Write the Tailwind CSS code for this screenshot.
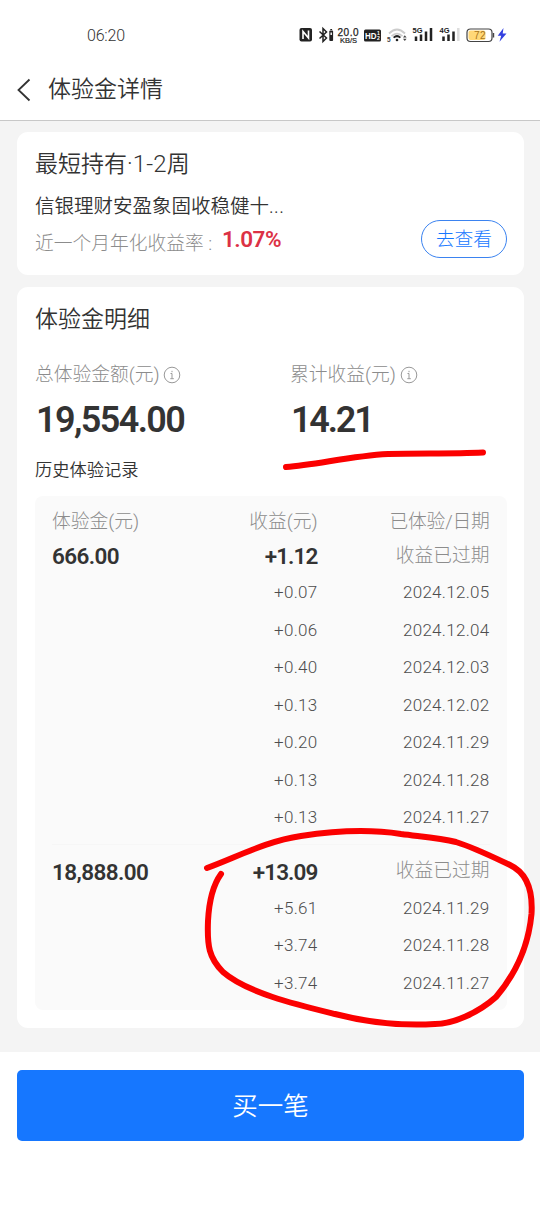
<!DOCTYPE html>
<html lang="zh-CN">

<head>
    <meta charset="UTF-8">
    <meta name="viewport" content="width=device-width, initial-scale=1.0">
    <title>体验金详情</title>
    <script src="https://cdn.jsdelivr.net/npm/@tailwindcss/browser@4"></script>
</head>

<body class="relative w-[540px] h-[1206px] overflow-hidden flex flex-col bg-[#f4f4f4] text-[#333] font-['Roboto','Noto_Sans_CJK_SC',sans-serif] font-[350] [font-kerning:none] whitespace-nowrap">
    <!-- Status bar -->
    <div class="h-[61px] shrink-0 bg-white flex items-center justify-between pl-[87px] pr-[33px] pt-[9px]">
        <span class="text-[16px] leading-5 pt-0.5 tracking-[-0.2px]">06:20</span>
        <svg width="208" height="20" viewBox="299 25 208 20" fill="none" class="overflow-visible font-['Liberation_Sans',sans-serif]">
            <!-- NFC -->
            <rect x="299.500" y="28" width="12.500" height="13.500" rx="2" fill="#222" />
            <path d="M303 39v-7.500l5.500 6.500v-7.500" stroke="#fff" stroke-width="1.600" />
            <!-- bluetooth -->
            <path d="M319.500 31.500l7 6.500-3.500 3.500v-13l3.500 3.500-7 6.500" stroke="#222" stroke-width="1.500" />
            <rect x="329.300" y="30.500" width="3.800" height="10.500" rx="1" fill="#222" />
            <path d="M330.300 29.500h1.800" stroke="#222" />
            <path d="M330.500 32.500h1.400v2.500h-1.400z" fill="#fff" />
            <text x="337.500" y="35.500" font-size="10" textLength="21" fill="#222" stroke="#222" stroke-width=".25">20.0</text>
            <text x="340" y="43" font-size="7.500" textLength="17" lengthAdjust="spacingAndGlyphs" fill="#222" stroke="#222" stroke-width=".2">KB/S</text>
            <!-- HD -->
            <rect x="364" y="29.500" width="17" height="12" rx="1.500" fill="#222" />
            <text x="365" y="39" font-size="9" font-weight="700" textLength="11.500" lengthAdjust="spacingAndGlyphs" fill="#fff">HD</text>
            <text x="377" y="35" font-size="5" font-weight="700" fill="#fff">1</text>
            <text x="377" y="40" font-size="5" font-weight="700" fill="#fff">2</text>
            <!-- wifi -->
            <path d="M389 33.500q8-8 16 0" stroke="#ccc" stroke-width="1.800" />
            <path d="M391.500 36.200q5.500-5 11 0" stroke="#ccc" stroke-width="1.600" />
            <path d="M393 37q4-3.800 8 0l-1.200 1.200q-2.800-2-5.600 0z" fill="#222" />
            <circle cx="397" cy="40" r="1.300" fill="#222" />
            <text x="387" y="41.500" font-size="6.500" font-weight="700" fill="#444">5</text>
            <path d="M403 37.500l1.800-2.200 1.800 2.200zM403 38.800l1.800 2.200 1.800-2.200z" fill="#444" />
            <!-- 5G signal -->
            <text x="412.500" y="33" font-size="8" font-weight="700" textLength="10" lengthAdjust="spacingAndGlyphs" fill="#222">5G</text>
            <path d="M416 36.500v4.500M421 34.500v6.500M426 31.500v9.500M431 28v13" stroke="#222" stroke-width="2.500" />
            <!-- 4G signal -->
            <text x="439.500" y="33" font-size="8" font-weight="700" textLength="10" lengthAdjust="spacingAndGlyphs" fill="#222">4G</text>
            <path d="M443.500 36.500v4.500M448.500 34.500v6.500M453.500 31.500v9.500" stroke="#222" stroke-width="2.500" />
            <path d="M458.300 28v13" stroke="#ddd" stroke-width="2.500" />
            <!-- battery -->
            <rect x="467" y="29" width="25" height="12.500" rx="3.500" fill="#fff" stroke="#444" stroke-width="1.200" />
            <rect x="468.500" y="30.500" width="17" height="9.500" rx="2" fill="#ffd878" />
            <path d="M493.500 33v4.500" stroke="#444" stroke-width="1.400" />
            <text x="474" y="39" font-size="10" textLength="11.500" fill="#a8741a">72</text>
            <path d="M503.500 28l-5.800 7.800h3.500l-1.700 6 7-8.300h-3.800z" fill="#3340e0" />
        </svg>
    </div>

    <!-- Title bar -->
    <div class="h-[60px] shrink-0 bg-white border-b border-[#c8c8c8] flex items-center pl-[17px] pb-[4px]">
        <svg width="14" height="24" viewBox="0 0 14 24" fill="none" stroke="#333" stroke-width="1.800" class="mt-0.5">
            <path d="M12.500 1.500L1.500 12l11 10.500" />
        </svg>
        <h1 class="ml-[17px] mt-0.5 text-[23px] leading-8 font-[350]">体验金详情</h1>
    </div>

    <main class="flex flex-col gap-3 px-[17px] pr-4 pt-[11px] h-[931px] shrink-0">
        <!-- Product card -->
        <section class="h-[143px] shrink-0 bg-white rounded-[11px] pl-[18px] pr-[17px] pt-[16px]">
            <h2 class="text-[23px] leading-8 font-[350]">最短持有·<span class="text-[24px] tracking-[0.2px]">1-2</span>周</h2>
            <div class="flex justify-between">
                <div class="pt-[11px]">
                    <p class="text-[19.5px] leading-[30px]">信银理财安盈象固收稳健十<span class="tracking-[0.4px]">...</span></p>
                    <p class="flex items-center h-[40px] text-[18.750px] text-[#8c8c8c] font-light"><span class="w-[187px] pt-1">近一个月年化收益率 :</span><span class="font-semibold text-[22.500px] tracking-[-0.5px] text-[#dc3145] -mt-1">1.07%</span></p>
                </div>
                <button class="mt-[39px] w-[86px] h-[38px] pt-0.5 rounded-full border-[1.500px] border-[#3b83f0] text-[#1677ff] text-[18.750px] leading-none font-light">去查看</button>
            </div>
        </section>

        <!-- Detail card -->
        <section class="h-[741px] shrink-0 bg-white rounded-[11px] px-[18px] pt-[17px]">
            <h2 class="text-[23px] leading-8 font-[350]">体验金明细</h2>
            <div class="flex mt-[24px]">
                <div class="w-[255px]">
                    <div class="flex items-center gap-1 text-[18.750px] leading-7 text-[#8c8c8c] font-light"><span class="w-[124px] pt-px">总体验金额(元)</span>
                        <svg width="18" height="18" viewBox="0 0 18 18" fill="none" stroke="#999"><circle cx="9" cy="9" r="7.800" /><path d="M7.500 7.500H9v5M7.300 12.700h3.500M9 4.800v1.400" /></svg>
                    </div>
                    <div class="font-semibold text-[36px] leading-[44px] tracking-[-1.600px] mt-[9px] pl-px">19,554.00</div>
                </div>
                <div>
                    <div class="flex items-center gap-1 text-[18.750px] leading-7 text-[#8c8c8c] font-light"><span class="w-[106px] pt-px">累计收益(元)</span>
                        <svg width="18" height="18" viewBox="0 0 18 18" fill="none" stroke="#999"><circle cx="9" cy="9" r="7.800" /><path d="M7.500 7.500H9v5M7.300 12.700h3.500M9 4.800v1.400" /></svg>
                    </div>
                    <div class="font-semibold text-[36px] leading-[44px] tracking-[-2.200px] mt-[9px] pl-px">14.21</div>
                </div>
            </div>
            <h3 class="mt-[16px] text-[17.250px] leading-6 font-[350]">历史体验记录</h3>

            <div id="records" class="mt-[14px] w-[472px] h-[514px] rounded-lg bg-[#fafafa] px-[17px] pt-[8px]">
                <div class="grid grid-cols-[130px_135.500px_172px] items-center h-[36px] pt-px text-[18.750px] text-[#8c8c8c] font-light">
                    <span>体验金(元)</span>
                    <span class="text-right">收益(元)</span>
                    <span class="text-right tracking-[-0.2px]">已体验/日期</span>
                </div>
            </div>
        </section>
    </main>

    <!-- Bottom bar -->
    <footer class="flex-1 bg-white pl-[17px] pr-4 pt-[18px]">
        <button class="block w-full h-[71px] pt-0.5 rounded-[5px] bg-[#1677ff] text-white text-[25.500px] font-[350]">买一笔</button>
    </footer>

    <!-- Pen marks -->
    <svg class="absolute inset-0" width="540" height="1206" fill="none" stroke="#fb0000" stroke-width="6" stroke-linecap="round" stroke-linejoin="round">
        <path d="M286 467C316 465 350 456 388 454C420 453 450 454 483 452.500" />
        <path d="M207 868C235 858 266 841 301 836C340 830 375 830 401 834C425 837 440 838 456 842C475 848 495 858 510 865C527 873 533 890 531.500 914C528 951 513 977 496 997C478 1013 453 1024 435 1024C402 1026 366 1022 335 1014C298 1005 247 993 223 972C209 958 207 946 208 921C209 902 213 885 221 874" />
    </svg>

    <script>
        const groups = [
            {
                amount: '666.00', income: '+1.12',
                rows: [['+0.07', '2024.12.05'], ['+0.06', '2024.12.04'], ['+0.40', '2024.12.03'], ['+0.13', '2024.12.02'],
                ['+0.20', '2024.11.29'], ['+0.13', '2024.11.28'], ['+0.13', '2024.11.27']]
            },
            {
                amount: '18,888.00', income: '+13.09',
                rows: [['+5.61', '2024.11.29'], ['+3.74', '2024.11.28'], ['+3.74', '2024.11.27']]
            }
        ];

        const records = document.getElementById('records');
        groups.forEach((g, i) => {
            const divider = i ? '<div class="mt-[7px] mb-[11px] h-px bg-[#f6f6f6]"></div>' : '';
            const rows = g.rows.map(([income, date]) => `
                <div class="grid grid-cols-[130px_135.500px_172px] items-center h-[37.5px] text-[17px] text-[#4d4d4d] font-light tracking-[0.300px] text-right">
                    <span class="col-start-2">${income}</span><span>${date}</span>
                </div>`).join('');
            records.insertAdjacentHTML('beforeend', `${divider}
                <div class="grid grid-cols-[130px_135.500px_172px] items-center h-[34px] text-[22.5px] font-semibold">
                    <span class="tracking-[-0.6px]">${g.amount}</span>
                    <span class="tracking-[-0.9px] text-right">${g.income}</span>
                    <span class="text-[18.750px] font-light text-[#8c8c8c] text-right -mt-0.5">收益已过期</span>
                </div>${rows}`);
        });
    </script>
</body>

</html>
